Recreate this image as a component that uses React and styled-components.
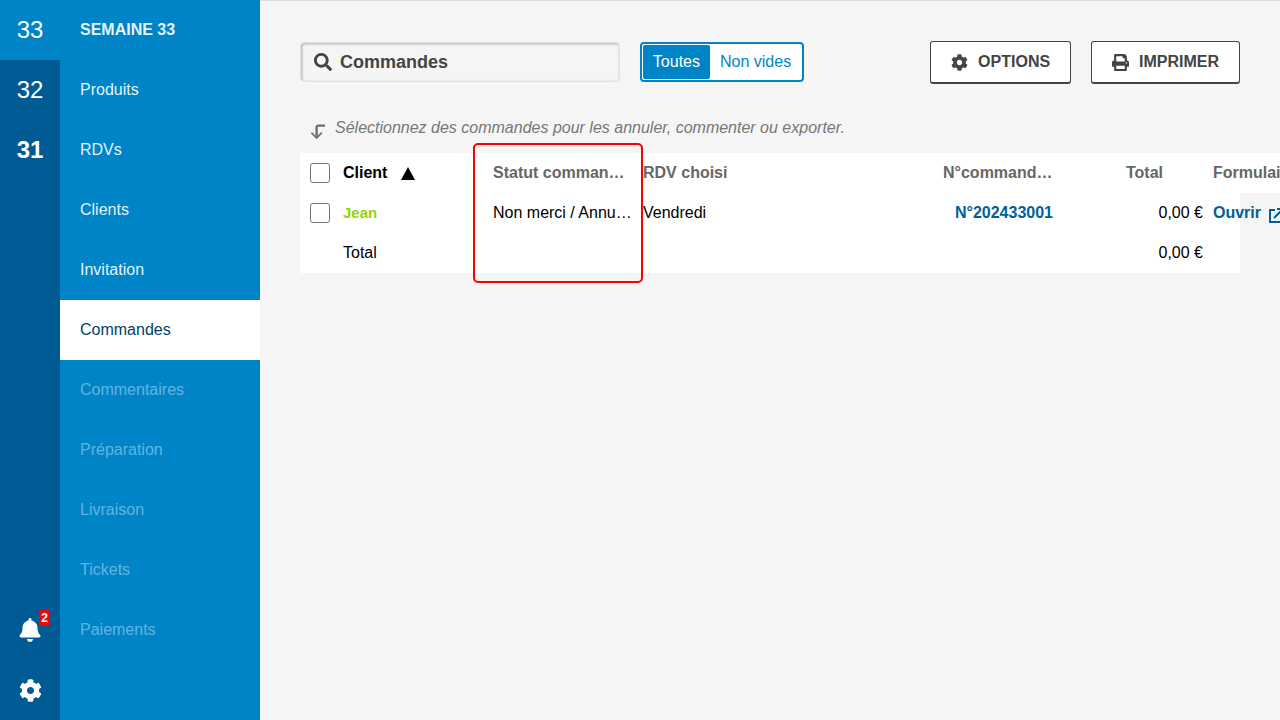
import React from 'react'
import styled, { createGlobalStyle } from 'styled-components'
import { FaSearch, FaCog, FaPrint, FaBell } from 'react-icons/fa'

const blue = '#0084c8'
const darkBlue = '#005b94'
const linkBlue = '#00609c'
const ink = '#444444'

const GlobalStyle = createGlobalStyle`
  html, body {
    margin: 0;
    height: 100%;
    overflow: hidden;
  }
  body {
    font-family: "Liberation Sans", Arial, sans-serif;
    font-size: 16px;
    color: #000;
  }
`

const Page = styled.div`
  display: flex;
  width: 1280px;
  height: 720px;
  overflow: hidden;
`

const WeekRail = styled.nav`
  display: flex;
  flex-direction: column;
  flex: 0 0 60px;
  background: ${darkBlue};
`

const WeekItem = styled.div`
  position: relative;
  display: flex;
  align-items: center;
  justify-content: center;
  height: 60px;
  font-size: 24px;
  color: #fff;
  font-weight: ${p => (p.$bold ? 700 : 400)};
  background: ${p => (p.$active ? blue : 'transparent')};
`

const RailSpacer = styled.div`
  flex: 1;
`

const Badge = styled.span`
  position: absolute;
  top: 10px;
  left: 39px;
  width: 11px;
  height: 16px;
  line-height: 16px;
  border-radius: 2px;
  background: #ff0000;
  color: #fff;
  font-size: 12px;
  font-weight: 700;
  text-align: center;
`

const Menu = styled.nav`
  display: flex;
  flex-direction: column;
  flex: 0 0 200px;
  background: ${blue};
`

const MenuItem = styled.div`
  display: flex;
  align-items: center;
  height: 60px;
  padding-left: 20px;
  color: ${p => (p.$active ? '#003f66' : p.$disabled ? 'rgba(255, 255, 255, 0.4)' : 'rgba(255, 255, 255, 0.92)')};
  background: ${p => (p.$active ? '#fff' : 'transparent')};
  font-weight: ${p => (p.$title ? 700 : 400)};
`

const Main = styled.main`
  flex: 1;
  min-width: 0;
  padding: 40px 40px 0;
  background: #f5f5f5;
  border-top: 1px solid #dcdcdc;
`

const Toolbar = styled.div`
  display: flex;
  align-items: center;
  height: 43px;
`

const SearchBox = styled.div`
  display: flex;
  align-items: center;
  gap: 8px;
  box-sizing: border-box;
  width: 320px;
  height: 40px;
  margin-top: -1px;
  padding: 1px 0 0 13px;
  border: 1px solid #e2e2e2;
  border-radius: 4px;
  box-shadow: inset 1px 1px 3px rgba(0, 0, 0, 0.3);
  color: ${ink};
  font-size: 18px;
  font-weight: 700;

  svg {
    margin-top: -2px;
  }
`

const Toggle = styled.div`
  display: flex;
  box-sizing: border-box;
  height: 40px;
  margin-top: -1px;
  margin-left: 20px;
  padding: 1px;
  border: 2px solid ${blue};
  border-radius: 4px;
  background: #fff;
`

const ToggleOption = styled.div`
  display: flex;
  align-items: center;
  padding: 0 10px;
  border-radius: 2px;
  white-space: nowrap;
  color: ${p => (p.$active ? '#fff' : blue)};
  background: ${p => (p.$active ? blue : 'transparent')};
`

const ToolButton = styled.button`
  display: flex;
  align-items: center;
  justify-content: center;
  gap: 10px;
  box-sizing: border-box;
  width: ${p => p.$width}px;
  height: 43px;
  margin-left: ${p => p.$gap}px;
  padding: 0;
  border: 1px solid ${ink};
  border-bottom-width: 2px;
  border-radius: 3px;
  background: #fff;
  color: ${ink};
  font-family: inherit;
  font-size: 16px;
  font-weight: 700;
`

const Hint = styled.div`
  display: flex;
  gap: 10px;
  box-sizing: border-box;
  height: 69px;
  padding: 35px 0 0 10px;
  color: #777;
  font-style: italic;

  svg {
    margin-top: 5px;
  }
`

const TableWrap = styled.div`
  position: relative;
  width: 940px;
  background: #fff;
`

const Row = styled.div`
  display: grid;
  grid-template-columns: 43px 130px 170px 300px 120px 150px 1fr;
  align-items: center;
  height: 40px;
  width: ${p => (p.$head ? '980px' : '940px')};
  background: #fff;
`

const CheckCell = styled.div`
  padding-left: 10px;
`

const CheckBox = styled.div`
  box-sizing: border-box;
  width: 20px;
  height: 20px;
  border: 1px solid #767676;
  border-radius: 3px;
  background: #fff;
`

const Cell = styled.div`
  min-width: 0;
  padding-left: ${p => p.$left || 0}px;
  padding-right: ${p => p.$right || 0}px;
  overflow: ${p => (p.$open ? 'visible' : 'hidden')};
  white-space: nowrap;
  text-overflow: ellipsis;
  text-align: ${p => (p.$end ? 'right' : 'left')};
`

const HeadCell = styled(Cell)`
  color: #666;
  font-weight: 700;
`

const ClientHead = styled.div`
  display: flex;
  align-items: center;
  gap: 14px;
  color: #000;
  font-weight: 700;
`

const ClientName = styled.span`
  color: #94d500;
  font-size: 15px;
  font-weight: 700;
`

const OrderLink = styled.span`
  color: ${linkBlue};
  font-weight: 700;
`

const OpenLink = styled(OrderLink)`
  display: inline-flex;
  align-items: center;
  gap: 7px;

  svg {
    flex: none;
    margin-top: 6px;
  }
`

const Highlight = styled.div`
  position: absolute;
  top: -10px;
  left: 173px;
  box-sizing: border-box;
  width: 170px;
  height: 140px;
  border: 2px solid #ff0000;
  border-radius: 5px;
  pointer-events: none;
`

const weeks = [
  { label: '33', active: true },
  { label: '32' },
  { label: '31', bold: true },
]

const menu = [
  { label: 'SEMAINE 33', title: true },
  { label: 'Produits' },
  { label: 'RDVs' },
  { label: 'Clients' },
  { label: 'Invitation' },
  { label: 'Commandes', active: true },
  { label: 'Commentaires', disabled: true },
  { label: 'Préparation', disabled: true },
  { label: 'Livraison', disabled: true },
  { label: 'Tickets', disabled: true },
  { label: 'Paiements', disabled: true },
]

const SortArrow = () => (
  <svg width="14" height="13" viewBox="0 0 14 13">
    <polygon points="7,0 14,13 0,13" fill="#000" />
  </svg>
)

const HookArrow = () => (
  <svg width="15" height="15" viewBox="0 0 15 15" fill="none" stroke="#6f6f6f">
    <path d="M15 1.6H8.6Q6.6 1.6 6.6 3.6V13" strokeWidth="2.4" />
    <path d="M1.4 8.6L6.6 14L11.8 8.6" strokeWidth="1.8" />
  </svg>
)

const OpenIcon = () => (
  <svg width="16" height="16" viewBox="0 0 16 16" fill="none" stroke="currentColor" strokeWidth="2">
    <path d="M7 2H2V14H14V9" />
    <path d="M6 10L14 2" />
    <path d="M9 1H15V7" />
  </svg>
)

const App = () => {
  return (
    <Page>
      <GlobalStyle />
      <WeekRail>
        {weeks.map(w => (
          <WeekItem key={w.label} $active={w.active} $bold={w.bold}>{w.label}</WeekItem>
        ))}
        <RailSpacer />
        <WeekItem>
          <FaBell size={24} />
          <Badge>2</Badge>
        </WeekItem>
        <WeekItem>
          <FaCog size={23} />
        </WeekItem>
      </WeekRail>

      <Menu>
        {menu.map(m => (
          <MenuItem key={m.label} $title={m.title} $active={m.active} $disabled={m.disabled}>{m.label}</MenuItem>
        ))}
      </Menu>

      <Main>
        <Toolbar>
          <SearchBox>
            <FaSearch size={18} />
            Commandes
          </SearchBox>
          <Toggle>
            <ToggleOption $active>Toutes</ToggleOption>
            <ToggleOption>Non vides</ToggleOption>
          </Toggle>
          <ToolButton $width={141} $gap={126}>
            <FaCog size={17} />
            OPTIONS
          </ToolButton>
          <ToolButton $width={149} $gap={20}>
            <FaPrint size={17} />
            IMPRIMER
          </ToolButton>
        </Toolbar>

        <Hint>
          <HookArrow />
          Sélectionnez des commandes pour les annuler, commenter ou exporter.
        </Hint>

        <TableWrap>
          <Row $head>
            <CheckCell><CheckBox /></CheckCell>
            <ClientHead>Client <SortArrow /></ClientHead>
            <HeadCell $left={20} $right={18}>Statut commande</HeadCell>
            <HeadCell>RDV choisi</HeadCell>
            <HeadCell $right={10} $end>N°commande client</HeadCell>
            <HeadCell $right={50} $end>Total</HeadCell>
            <HeadCell $open>Formulaire</HeadCell>
          </Row>
          <Row>
            <CheckCell><CheckBox /></CheckCell>
            <Cell><ClientName>Jean</ClientName></Cell>
            <Cell $left={20} $right={10}>Non merci / Annulée</Cell>
            <Cell>Vendredi</Cell>
            <Cell $right={10} $end><OrderLink>N°202433001</OrderLink></Cell>
            <Cell $right={10} $end>0,00 €</Cell>
            <Cell $open>
              <OpenLink>Ouvrir <OpenIcon /></OpenLink>
            </Cell>
          </Row>
          <Row>
            <div />
            <Cell>Total</Cell>
            <div />
            <div />
            <div />
            <Cell $right={10} $end>0,00 €</Cell>
            <div />
          </Row>
          <Highlight />
        </TableWrap>
      </Main>
    </Page>
  )
}

export default App
